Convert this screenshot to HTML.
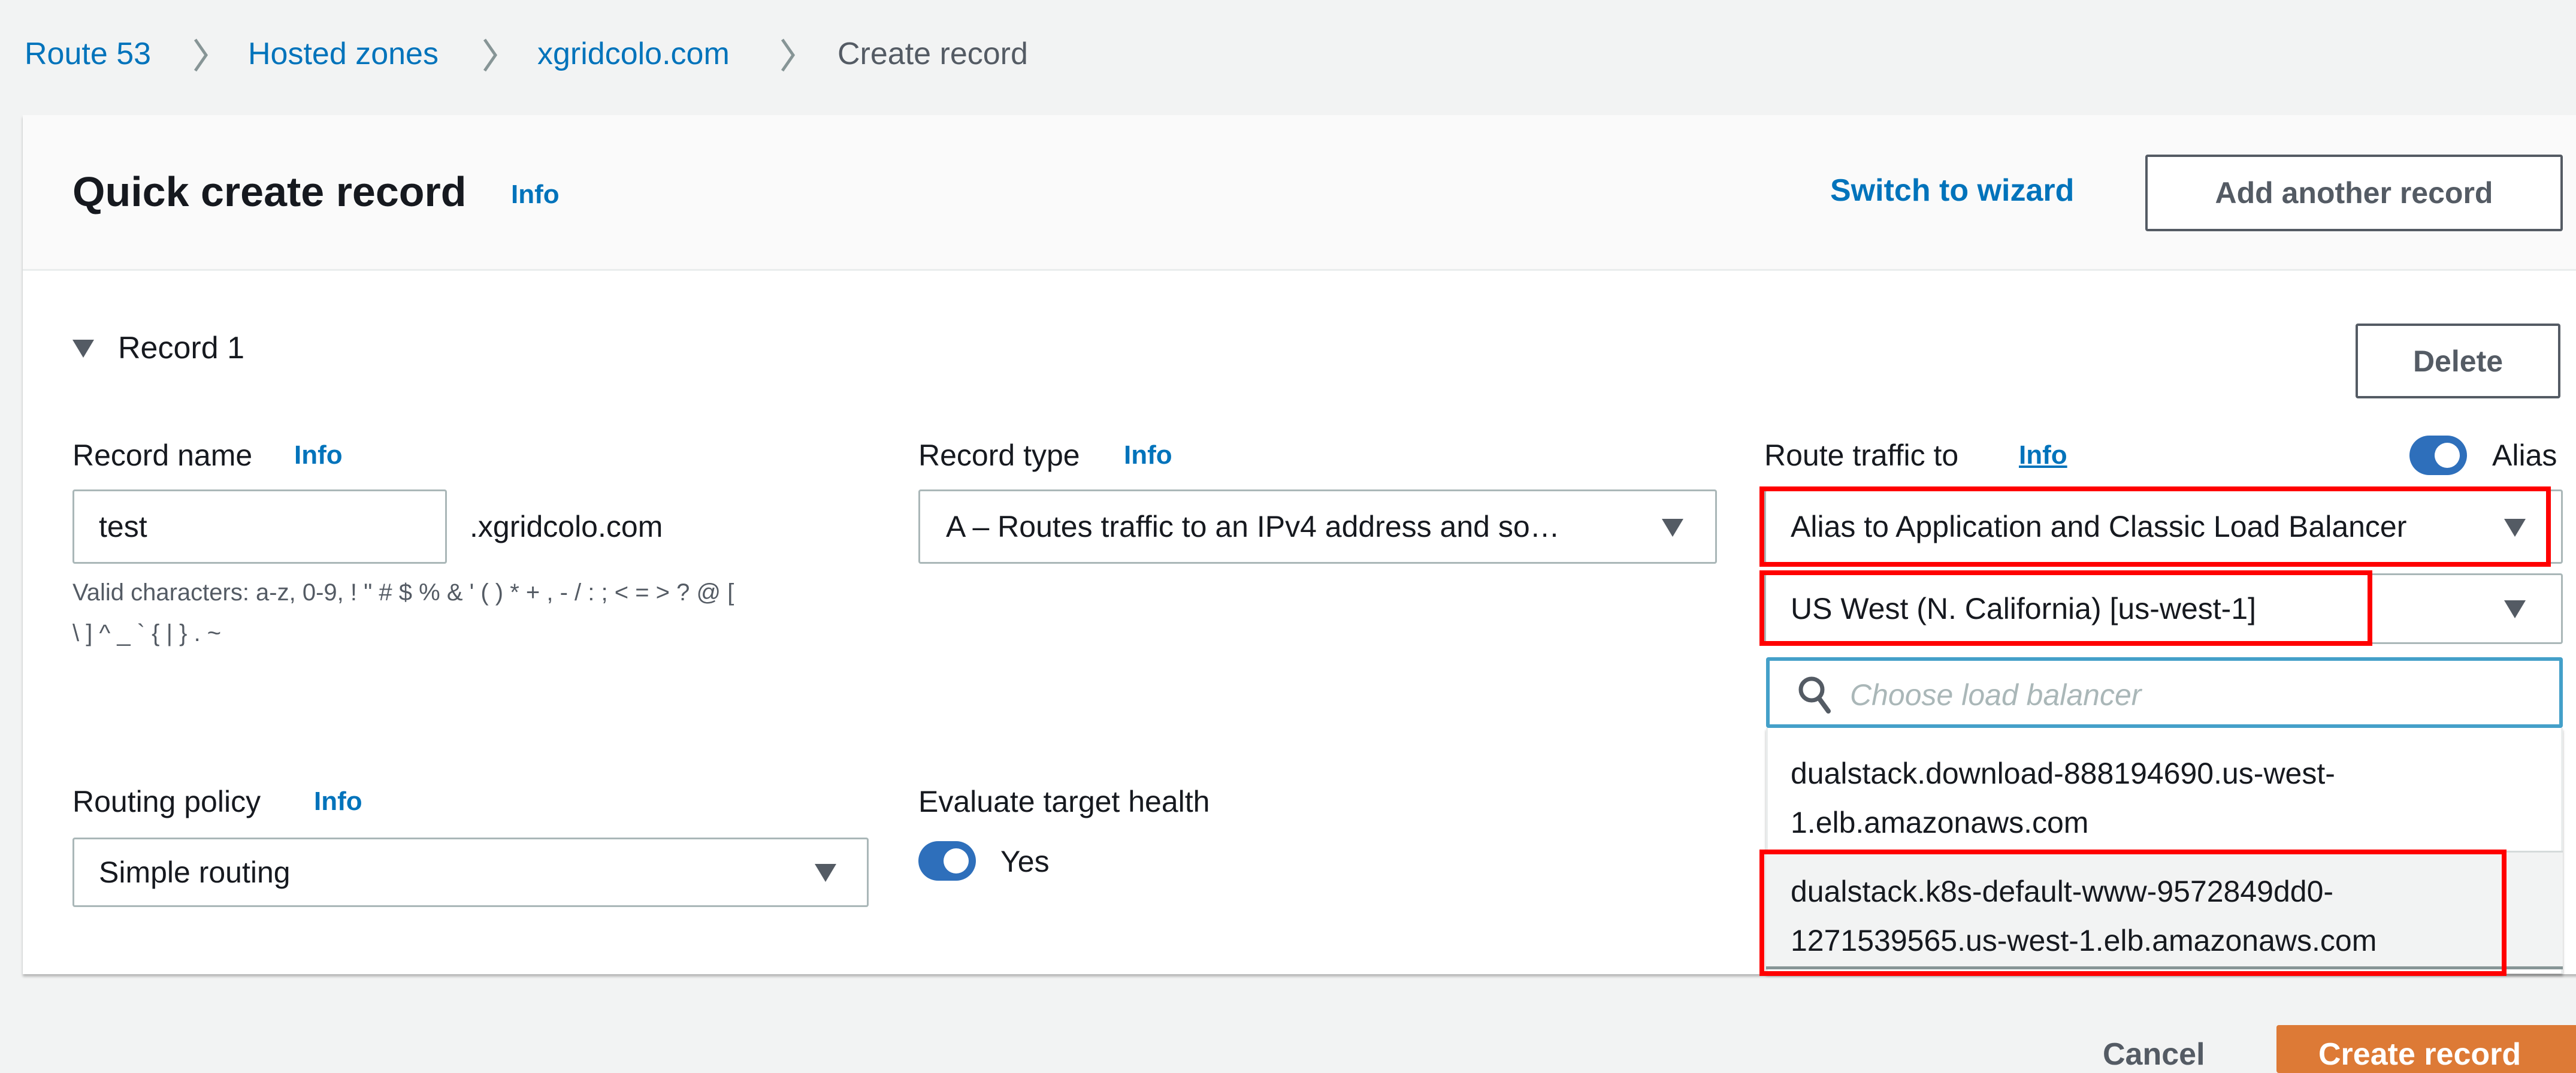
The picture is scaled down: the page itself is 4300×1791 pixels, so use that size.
<!DOCTYPE html>
<html><head><meta charset="utf-8"><style>
*{box-sizing:border-box;margin:0;padding:0}
body{width:4300px;height:1764px;background:#f2f3f3;font-family:"Liberation Sans",Arial,sans-serif;color:#16191f;position:relative;overflow:hidden}
.a{position:absolute;white-space:nowrap}
.link{color:#0073bb}
.info{color:#0073bb;font-weight:bold;font-size:44px}
.lbl{font-size:50px;line-height:60px}
.box{position:absolute;background:#fff;border:3px solid #aab7b8;border-radius:4px}
.red{position:absolute;border:8px solid #ff0000}
.tri{position:absolute;width:0;height:0;border-left:18px solid transparent;border-right:18px solid transparent;border-top:30px solid #545b64}
.tog{position:absolute;width:96px;height:66px;border-radius:33px;background:#2e6fbb}
.tog::after{content:"";position:absolute;right:12px;top:12px;width:42px;height:42px;border-radius:50%;background:#fff}
.btn{position:absolute;border:4px solid #545b64;border-radius:4px;background:#fff;font-weight:bold;color:#545b64;font-size:50px;display:flex;align-items:center;justify-content:center}
.bc{position:absolute;top:60px;font-size:52px;line-height:60px;white-space:nowrap}
</style></head><body>
<div class="bc link" style="left:41px">Route 53</div>
<svg class="a" style="left:322px;top:62px" width="26" height="60" viewBox="0 0 26 60"><path d="M4 4 L22 30 L4 56" fill="none" stroke="#879596" stroke-width="5"/></svg>
<div class="bc link" style="left:414px">Hosted zones</div>
<svg class="a" style="left:805px;top:62px" width="26" height="60" viewBox="0 0 26 60"><path d="M4 4 L22 30 L4 56" fill="none" stroke="#879596" stroke-width="5"/></svg>
<div class="bc link" style="left:897px">xgridcolo.com</div>
<svg class="a" style="left:1302px;top:62px" width="26" height="60" viewBox="0 0 26 60"><path d="M4 4 L22 30 L4 56" fill="none" stroke="#879596" stroke-width="5"/></svg>
<div class="bc" style="left:1398px;color:#545b64">Create record</div>

<div style="position:absolute;left:38px;top:192px;width:4300px;height:1434px;background:#fff;box-shadow:0 4px 4px rgba(0,0,0,.25)"></div>
<div style="position:absolute;left:38px;top:192px;width:4300px;height:260px;background:#fafafa;border-bottom:3px solid #eaeded"></div>

<div class="a" style="left:121px;top:280px;font-size:70px;font-weight:bold;line-height:80px">Quick create record</div>
<div class="a info" style="left:853px;top:300px">Info</div>
<div class="a link" style="left:3055px;top:288px;font-size:52px;font-weight:bold">Switch to wizard</div>
<div class="btn" style="left:3581px;top:258px;width:697px;height:128px">Add another record</div>

<div class="tri" style="left:121px;top:567px"></div>
<div class="a lbl" style="left:197px;top:551px;font-size:52px">Record 1</div>
<div class="btn" style="left:3932px;top:540px;width:342px;height:125px">Delete</div>

<div class="a lbl" style="left:121px;top:730px">Record name</div>
<div class="a info" style="left:491px;top:735px">Info</div>
<div class="a lbl" style="left:1533px;top:730px">Record type</div>
<div class="a info" style="left:1876px;top:735px">Info</div>
<div class="a lbl" style="left:2945px;top:730px">Route traffic to</div>
<div class="a info" style="left:3370px;top:735px;text-decoration:underline">Info</div>
<div class="tog" style="left:4022px;top:727px"></div>
<div class="a lbl" style="left:4160px;top:730px">Alias</div>

<div class="box" style="left:121px;top:817px;width:625px;height:124px"></div>
<div class="a lbl" style="left:165px;top:849px">test</div>
<div class="a lbl" style="left:784px;top:849px">.xgridcolo.com</div>
<div class="a" style="left:121px;top:955px;font-size:40px;line-height:68px;color:#545b64">Valid characters: a-z, 0-9, ! " # $ % &amp; ' ( ) * + , - / : ; &lt; = &gt; ? @ [<br>\ ] ^ _ ` { | } . ~</div>

<div class="box" style="left:1533px;top:817px;width:1333px;height:124px"></div>
<div class="a lbl" style="left:1579px;top:849px">A – Routes traffic to an IPv4 address and so…</div>
<div class="tri" style="left:2774px;top:866px"></div>

<div class="box" style="left:2945px;top:817px;width:1333px;height:124px"></div>
<div class="a lbl" style="left:2989px;top:849px">Alias to Application and Classic Load Balancer</div>
<div class="tri" style="left:4180px;top:866px"></div>
<div class="red" style="left:2937px;top:812px;width:1321px;height:134px"></div>

<div class="box" style="left:2945px;top:957px;width:1333px;height:118px"></div>
<div class="a lbl" style="left:2989px;top:986px">US West (N. California) [us-west-1]</div>
<div class="tri" style="left:4180px;top:1002px"></div>
<div class="red" style="left:2937px;top:952px;width:1023px;height:126px"></div>

<div style="position:absolute;left:2948px;top:1097px;width:1330px;height:118px;background:#fff;border:6px solid #44a0c9;border-radius:4px"></div>
<svg class="a" style="left:3000px;top:1125px" width="60" height="70" viewBox="0 0 60 70"><circle cx="24" cy="26" r="18" fill="none" stroke="#545b64" stroke-width="7"/><line x1="36" y1="40" x2="52" y2="62" stroke="#545b64" stroke-width="8" stroke-linecap="round"/></svg>
<div class="a lbl" style="left:3088px;top:1130px;color:#aab7b8;font-style:italic">Choose load balancer</div>

<div style="position:absolute;left:2948px;top:1215px;width:1330px;height:410px;background:#fff;border-left:3px solid #eaeded;border-right:3px solid #eaeded;box-shadow:0 4px 4px rgba(0,0,0,.3)"></div>
<div class="a lbl" style="left:2989px;top:1250px;line-height:82px">dualstack.download-888194690.us-west-<br>1.elb.amazonaws.com</div>
<div style="position:absolute;left:2948px;top:1420px;width:1330px;height:198px;background:#f2f3f3;border-top:3px solid #d5dbdb;border-bottom:5px solid #879596"></div>
<div class="a lbl" style="left:2989px;top:1447px;line-height:82px">dualstack.k8s-default-www-9572849dd0-<br>1271539565.us-west-1.elb.amazonaws.com</div>
<div class="red" style="left:2937px;top:1418px;width:1247px;height:211px"></div>

<div class="a lbl" style="left:121px;top:1308px">Routing policy</div>
<div class="a info" style="left:524px;top:1313px">Info</div>
<div class="box" style="left:121px;top:1398px;width:1329px;height:116px"></div>
<div class="a lbl" style="left:165px;top:1426px">Simple routing</div>
<div class="tri" style="left:1360px;top:1442px"></div>

<div class="a lbl" style="left:1533px;top:1308px">Evaluate target health</div>
<div class="tog" style="left:1533px;top:1404px"></div>
<div class="a lbl" style="left:1670px;top:1408px">Yes</div>

<div class="a" style="left:3510px;top:1730px;font-size:52px;font-weight:bold;color:#545b64">Cancel</div>
<div style="position:absolute;left:3800px;top:1711px;width:520px;height:80px;background:#dd7a36;border-radius:4px"></div>
<div class="a" style="left:3870px;top:1730px;font-size:52px;font-weight:bold;color:#fff">Create record</div>
</body></html>
